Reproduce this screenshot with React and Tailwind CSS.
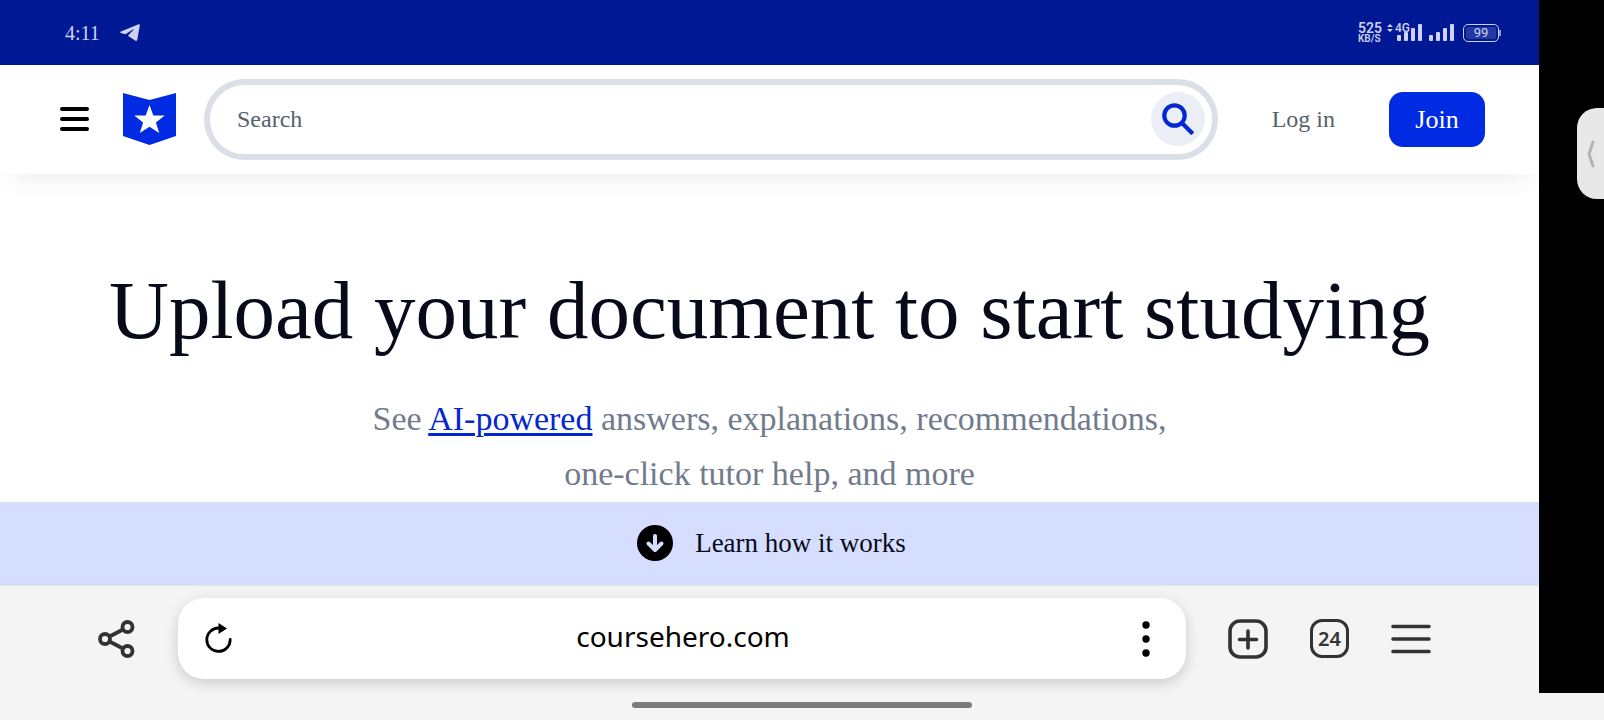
function SignalBars() {
  return (
    <svg width="25" height="18" viewBox="0 0 25 18" fill="currentColor" aria-hidden="true">
      <rect x="0" y="11" width="4" height="6" rx="1" />
      <rect x="7" y="8" width="4" height="9" rx="1" />
      <rect x="14" y="4" width="4" height="13" rx="1" />
      <rect x="21" y="0" width="4" height="17" rx="1" />
    </svg>
  );
}

function StatusBar() {
  return (
    <div className="h-[65px] shrink-0 flex items-center justify-between bg-[#001894] text-[#ccd2f0] pl-[65px] pr-[38px]">
      <div className="flex items-center gap-5">
        <span className="text-[20px]">4:11</span>
        <svg width="20" height="18" viewBox="0 0 20 18" fill="currentColor" aria-hidden="true">
          <path d="M18.600 0.300C19.400 0 20 0.400 19.800 1.300L17.300 15.800C17.100 16.900 16.300 17.200 15.500 16.700L8.600 12.300C8 11.900 8 11.400 8.500 10.900L13.800 5.600C14.100 5.200 13.700 5 13.300 5.300L5.900 9.900C5.300 10.200 4.800 10.200 4.200 10L0.800 9C0 8.700 0 8 0.900 7.600Z" />
        </svg>
      </div>

      <div className="flex items-center gap-[7px] font-['Roboto',sans-serif]">
        <div className="flex flex-col font-semibold">
          <span className="text-[14px] leading-[12px]">525</span>
          <span className="text-[10px] leading-[10px]">KB/S</span>
        </div>

        <div className="relative pl-2">
          <SignalBars />
          <span className="absolute -left-[2px] -top-[2px] flex items-center gap-[2px] text-[12px] leading-[12px] font-medium">
            <svg width="6" height="8" viewBox="0 0 6 8" fill="currentColor" aria-hidden="true">
              <path d="M3 0l3 3H0zM3 8L0 5h6z" />
            </svg>
            4G
          </span>
        </div>

        <SignalBars />

        <div className="flex items-center pl-[2px]">
          <div className="w-9 h-[18px] rounded-[5px] border border-[#ccd2f0] p-[2px]">
            <div className="h-full rounded-[2px] bg-[#2438a4] flex items-center justify-center text-[13px]">
              99
            </div>
          </div>
          <div className="w-[2px] h-[6px] bg-[#8b97d4]" />
        </div>
      </div>
    </div>
  );
}

function Header() {
  return (
    <header className="h-[109px] shrink-0 flex items-center bg-white pl-[60px] pr-[54px] pb-px shadow-[0_16px_24px_-12px_rgba(40,60,80,0.09)]">
      <button aria-label="Menu" className="mr-[34px]">
        <svg width="29" height="26" viewBox="0 0 29 26" stroke="#000" strokeWidth="4" strokeLinecap="round">
          <path d="M2 3h25M2 13h25M2 23h25" />
        </svg>
      </button>

      <a href="#" aria-label="Home" className="mr-7">
        <svg width="53" height="52" viewBox="0 0 53 52">
          <path d="M0 0l26.500 7L53 0v43l-26.500 9L0 43z" fill="#002be3" />
          <path
            d="M26.500 12l3.800 10.500h11.400l-8.800 6.900 3.300 10.600-9.700-6.300-9.700 6.300 3.300-10.600-8.800-6.900h11.400z"
            fill="#fff"
          />
        </svg>
      </a>

      <form
        onSubmit={(e) => e.preventDefault()}
        className="flex-1 h-[81px] flex items-center rounded-full border-[6px] border-[#dae0e5] pl-[27px] pr-[7px]"
      >
        <input
          aria-label="Search"
          placeholder="Search"
          className="flex-1 min-w-0 text-[24px] outline-none placeholder:text-[#56616b]"
        />
        <button
          aria-label="Submit search"
          className="size-[54px] rounded-full bg-[#ebeff5] flex items-center justify-center"
        >
          <svg width="32" height="32" viewBox="0 0 32 32" fill="none" stroke="#0428d0" strokeWidth="4.200">
            <circle cx="12.500" cy="12.500" r="10.200" />
            <path d="M19.700 19.700l11 11" />
          </svg>
        </button>
      </form>

      <a href="#" className="mx-[54px] text-[24px] text-[#56616b]">
        Log in
      </a>
      <button className="w-24 h-[55px] rounded-[14px] bg-[#002be3] text-[26px] text-white">
        Join
      </button>
    </header>
  );
}

function BrowserBar() {
  return (
    <div className="h-[108px] shrink-0 flex items-start bg-[#f4f4f4] border-t border-[#e2e3ea] pt-3 pl-[98px] pr-[108px] text-[#333]">
      <button aria-label="Share" className="h-[81px] mr-[43px] flex items-center">
        <svg width="37" height="38" viewBox="0 0 37 38" fill="none" stroke="currentColor" strokeWidth="3.800">
          <circle cx="7" cy="19" r="5" />
          <circle cx="29.500" cy="7" r="5" />
          <circle cx="29.500" cy="31" r="5" />
          <path d="M11.500 16.500L25 9.500M11.500 21.500L25 28.500" />
        </svg>
      </button>

      <div className="flex-1 h-[81px] flex items-center rounded-[26px] bg-white pl-[27px] pr-9 text-black shadow-[0_4px_14px_rgba(0,0,0,0.17)]">
        <button aria-label="Reload">
          <svg width="27" height="32" viewBox="0 0 27 32">
            <path
              d="M14 5A11.700 11.700 0 1 0 25.200 16.500"
              fill="none"
              stroke="#000"
              strokeWidth="2.800"
              strokeLinecap="round"
            />
            <path d="M13.500 0l8.500 5.500-8.500 5.500z" fill="#000" />
          </svg>
        </button>
        <span className="flex-1 pb-[6px] pr-2 text-center text-[28px] font-['Noto_Sans',sans-serif]">
          coursehero.com
        </span>
        <button aria-label="Page options">
          <svg width="8" height="36" viewBox="0 0 8 36">
            <circle cx="4" cy="4" r="3.700" />
            <circle cx="4" cy="18" r="3.700" />
            <circle cx="4" cy="32" r="3.700" />
          </svg>
        </button>
      </div>

      <div className="h-[81px] ml-[42px] flex items-center gap-[42px]">
        <button aria-label="New tab">
          <svg width="40" height="40" viewBox="0 0 40 40" fill="none" stroke="currentColor" strokeWidth="3.600" strokeLinecap="round">
            <rect x="2" y="2" width="36" height="36" rx="10" />
            <path d="M20 12v17M11.500 20.500h17" />
          </svg>
        </button>
        <button
          aria-label="Open tabs"
          className="size-[39px] rounded-xl border-[3px] border-[#333] text-[20px] leading-[32px] font-semibold font-['Noto_Sans',sans-serif]"
        >
          24
        </button>
        <button aria-label="Browser menu">
          <svg width="40" height="30" viewBox="0 0 40 30" stroke="currentColor" strokeWidth="3.600" strokeLinecap="round">
            <path d="M2 2.500h36M2 15h36M2 27.500h36" />
          </svg>
        </button>
      </div>
    </div>
  );
}

export default function App() {
  return (
    <div className="min-h-screen flex flex-col bg-[#f4f4f4] font-['Liberation_Serif',serif]">
      <div className="flex-1 flex">
        <div className="flex-1 min-w-0 flex flex-col bg-white">
          <StatusBar />
          <Header />

          <main className="flex-1 text-center pt-[88px]">
            <h1 className="text-[83px] leading-[96px] text-[#070a18]">
              Upload your document to start studying
            </h1>
            <p className="mt-[33px] text-[34px] leading-[55px] text-[#727b8c]">
              See{" "}
              <a href="#" className="text-[#0428d0] underline decoration-3 underline-offset-3">
                AI-powered
              </a>{" "}
              answers, explanations, recommendations,
              <br />
              one-click tutor help, and more
            </p>
          </main>

          <button className="h-[83px] shrink-0 flex items-center justify-center gap-[22px] bg-[#d6deff] pl-1 pb-px text-[27px] text-[#070a18]">
            <svg width="36" height="36" viewBox="0 0 36 36">
              <circle cx="18" cy="18" r="18" fill="#000" />
              <path
                d="M18 11v13M11.500 18.500L18 25l6.500-6.500"
                fill="none"
                stroke="#d6deff"
                strokeWidth="4"
                strokeLinecap="round"
                strokeLinejoin="round"
              />
            </svg>
            Learn how it works
          </button>

          <BrowserBar />
        </div>

        {/* edge panel */}
        <aside className="w-[65px] shrink-0 bg-black flex flex-col items-end pt-[108px]">
          <button
            aria-label="Open side panel"
            className="w-[27px] h-[91px] rounded-l-[20px] bg-[#e8e8e8] flex items-center justify-center"
          >
            <svg width="8" height="28" viewBox="0 0 8 28" fill="none" stroke="#b4b4b4" strokeWidth="3" strokeLinecap="round" strokeLinejoin="round">
              <path d="M6 2L2 14l4 12" />
            </svg>
          </button>
        </aside>
      </div>

      {/* home indicator */}
      <div className="h-[27px] flex justify-center pt-[9px]">
        <div className="w-[340px] h-[6px] rounded-full bg-[#7b7b7b]" />
      </div>
    </div>
  );
}
